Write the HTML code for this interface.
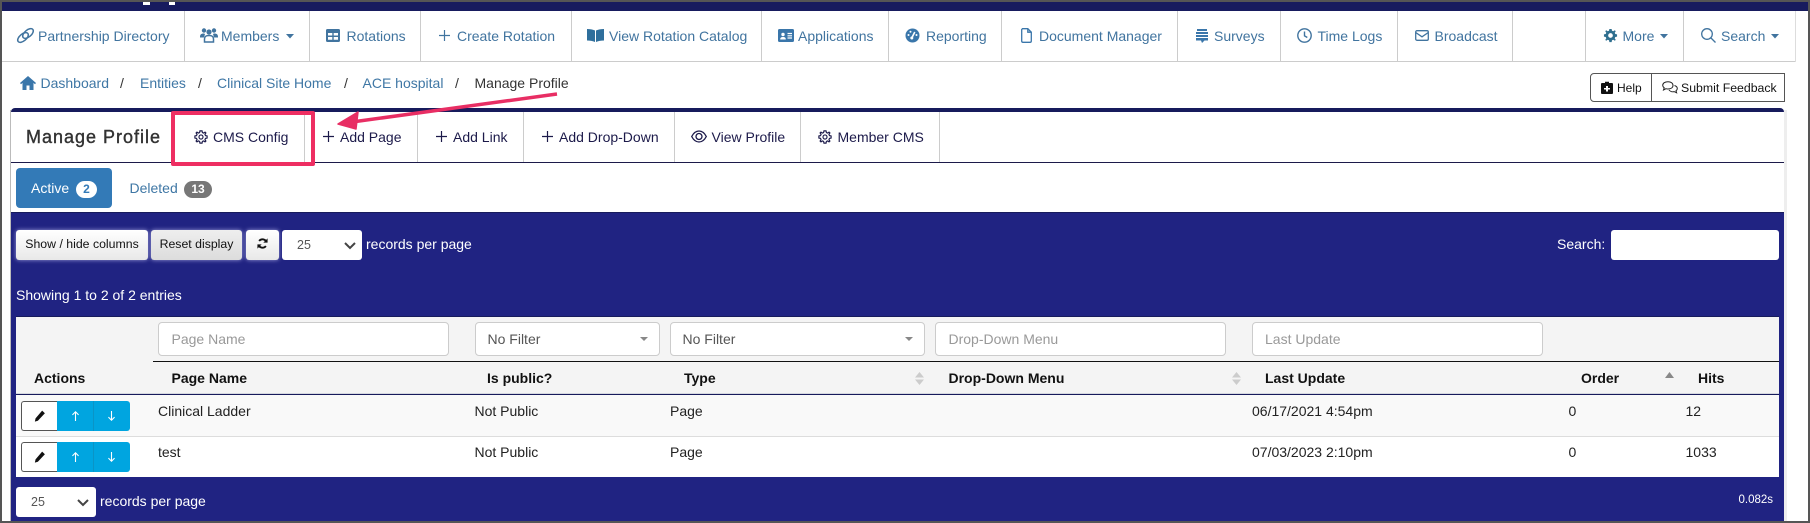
<!DOCTYPE html>
<html><head><meta charset="utf-8"><title>Manage Profile</title>
<style>
html,body{margin:0;padding:0}
html{background:#fff}
body{width:1810px;height:523px;position:relative;overflow:hidden;background:#fff;font-family:"Liberation Sans",sans-serif;font-size:14px;color:#333;filter:blur(.3px)}
.b{position:absolute}
.t{position:absolute;white-space:nowrap;line-height:20px;height:20px}
svg{position:absolute;overflow:visible}
.n{color:#41749f}
.l{color:#3f77a5}
.k{color:#1c1a4a}
.w{color:#fff}
.h{font-weight:bold;color:#111}
.s{background:#ccc;width:1px;top:11px;height:51px}
.p{background:#ccc;width:1px;top:112px;height:50px}
.inp{background:#fff;border:1px solid #ccc;border-radius:4px;box-sizing:border-box;height:34px;top:322px}
.ph{color:#999}
.btn{background:linear-gradient(#fff,#e8e8e8);border-radius:3px;box-shadow:0 0 4px #9c9cd8;top:230px;height:30px;box-sizing:border-box;color:#111;font-size:12.3px;text-align:center;line-height:29px;white-space:nowrap}
</style></head><body>
<!-- frame -->
<div class="b" style="left:0;top:0;width:1810px;height:2px;background:#555"></div>
<div class="b" style="left:0;top:2px;width:1808px;height:9px;background:#171b5e"></div>
<div class="b" style="left:143px;top:2px;width:7px;height:3px;background:#fff"></div>
<div class="b" style="left:169px;top:2px;width:6px;height:3px;background:#fff"></div>
<div class="b" style="left:0;top:0;width:2px;height:523px;background:#555"></div>
<div class="b" style="left:1808px;top:0;width:2px;height:523px;background:#555"></div>
<div class="b" style="left:2px;top:61px;width:1793px;height:1px;background:#ccc"></div>
<div class="b" style="left:1795px;top:11px;width:1px;height:51px;background:#ddd"></div>
<div class="b s" style="left:184px"></div><div class="b s" style="left:309px"></div><div class="b s" style="left:420px"></div><div class="b s" style="left:571px"></div><div class="b s" style="left:761px"></div><div class="b s" style="left:888px"></div><div class="b s" style="left:1001px"></div><div class="b s" style="left:1177px"></div><div class="b s" style="left:1280px"></div><div class="b s" style="left:1397px"></div><div class="b s" style="left:1512px"></div><div class="b s" style="left:1585px"></div><div class="b s" style="left:1683px"></div>

<!-- nav -->
<svg style="left:16px;top:27px" width="19" height="17" viewBox="0 0 19 17" fill="none" stroke="#41749f" stroke-width="1.5"><ellipse cx="7" cy="10.5" rx="6.3" ry="3.4" transform="rotate(-40 7 10.5)"/><ellipse cx="12" cy="6.5" rx="6.3" ry="3.4" transform="rotate(-40 12 6.5)"/></svg>
<div class="t n" style="left:38px;top:26px">Partnership Directory</div>
<svg style="left:200px;top:27px" width="18" height="16" viewBox="0 0 18 16" fill="#41749f"><circle cx="4" cy="3.5" r="2.2"/><circle cx="14" cy="3.5" r="2.2"/><circle cx="9" cy="5" r="2.6"/><path d="M0 10c0-3 1.5-3.5 4-3.5l1 .5-1 3.5H0zM18 10c0-3-1.5-3.500-4-3.500l-1 .5 1 3.500h4z"/><path d="M4.500 15v-3c0-3 2-3.500 4.500-3.500s4.500.5 4.500 3.500v3z" fill="none" stroke="#41749f" stroke-width="1.5"/></svg>
<div class="t n" style="left:221px;top:26px">Members</div>
<svg style="left:286px;top:34px" width="8" height="4.500" viewBox="0 0 9 5" fill="#41749f"><path d="M0 0h9L4.500 5z"/></svg>
<svg style="left:326px;top:29px" width="14" height="13" viewBox="0 0 14 13"><rect width="14" height="13" rx="1.500" fill="#41749f"/><path d="M2 4h4.300v2.500H2zM7.700 4H12v2.500H7.700zM2 8h4.300v2.800H2zM7.700 8H12v2.800H7.700z" fill="#fff"/></svg>
<div class="t n" style="left:346.5px;top:26px">Rotations</div>
<svg style="left:439px;top:30px" width="11" height="11" viewBox="0 0 11 11" stroke="#41749f" stroke-width="1.2"><path d="M5.500 0v11M0 5.500h11"/></svg>
<div class="t n" style="left:457px;top:26px">Create Rotation</div>
<svg style="left:587px;top:29px" width="17" height="13" viewBox="0 0 17 13" fill="#2f6f9c"><path d="M0 0c3 0 6 .5 8 1.500V13c-2-1-5-1.500-8-1.500zM17 0c-3 0-6 .5-8 1.500V13c2-1 5-1.500 8-1.500z"/></svg>
<div class="t n" style="left:609px;top:26px">View Rotation Catalog</div>
<svg style="left:778px;top:29px" width="16" height="13" viewBox="0 0 16 13"><rect width="16" height="13" rx="1.500" fill="#3a76aa"/><circle cx="5" cy="5.500" r="1.700" fill="#fff"/><path d="M2.200 10.500c0-2 1-2.500 2.800-2.500s2.800.5 2.800 2.500z" fill="#fff"/><path d="M9.500 4.500h4.500M9.500 6.800h4.500M9.500 9h4.500" stroke="#fff" stroke-width="1.2"/></svg>
<div class="t n" style="left:798px;top:26px">Applications</div>
<svg style="left:905px;top:28px" width="15" height="15" viewBox="0 0 15 15"><circle cx="7.500" cy="7.500" r="7" fill="#3a76aa"/><path d="M7 9.500L9.800 4" stroke="#fff" stroke-width="1.6"/><circle cx="6.800" cy="10" r="1.500" fill="#fff"/><circle cx="3.500" cy="7" r="1" fill="#fff"/><circle cx="5.500" cy="3.800" r="1" fill="#fff"/><circle cx="11.500" cy="7" r="1" fill="#fff"/></svg>
<div class="t n" style="left:926px;top:26px">Reporting</div>
<svg style="left:1021px;top:28px" width="11" height="15" viewBox="0 0 11 15" fill="none" stroke="#3a76aa" stroke-width="1.3"><path d="M1.500.7h5.300L10.300 4.200V13a1.300 1.300 0 0 1-1.300 1.300H2A1.300 1.300 0 0 1 .7 13V1.500z"/><path d="M6.800.7v3.500h3.500"/></svg>
<div class="t n" style="left:1039px;top:26px">Document Manager</div>
<svg style="left:1196px;top:29px" width="12" height="15" viewBox="0 0 12 15" fill="#3a76aa"><path d="M1 0h10v2H1zM0 3h12v2H0zM0 6h12v2H0zM0 9h12v2.500H8.500L6 14l-1-2.500H0z"/></svg>
<div class="t n" style="left:1214px;top:26px">Surveys</div>
<svg style="left:1297px;top:28px" width="15" height="15" viewBox="0 0 15 15" fill="none" stroke="#41749f" stroke-width="1.4"><circle cx="7.500" cy="7.500" r="6.700"/><path d="M7.500 3.500v4.300l2.800 1.700"/></svg>
<div class="t n" style="left:1317.5px;top:26px">Time Logs</div>
<svg style="left:1415px;top:30px" width="14" height="11" viewBox="0 0 14 11" fill="none" stroke="#41749f" stroke-width="1.3"><rect x=".7" y=".7" width="12.600" height="9.600" rx="1.300"/><path d="M.7 2.500L7 6.800l6.300-4.300"/></svg>
<div class="t n" style="left:1434.5px;top:26px">Broadcast</div>
<svg style="left:1603px;top:28px" width="15" height="15" viewBox="0 0 16 16"><path fill="#2f6f8f" fill-rule="evenodd" d="M6.800 1H9.200L9.600 2.900 11 3.500 12.600 2.400 13.600 3.400 12.500 5 13.100 6.400 15 6.800V9.200L13.100 9.600 12.500 11 13.600 12.600 12.600 13.600 11 12.500 9.600 13.100 9.200 15H6.800L6.400 13.100 5 12.500 3.400 13.600 2.400 12.600 3.500 11 2.900 9.600 1 9.200V6.800L2.900 6.400 3.500 5 2.400 3.400 3.400 2.400 5 3.500 6.400 2.900ZM8 5.500a2.500 2.500 0 1 0 0 5 2.500 2.500 0 0 0 0-5Z"/></svg>
<div class="t n" style="left:1622.5px;top:26px">More</div>
<svg style="left:1660px;top:34px" width="8" height="4.500" viewBox="0 0 9 5" fill="#41749f"><path d="M0 0h9L4.500 5z"/></svg>
<svg style="left:1701px;top:28px" width="15" height="15" viewBox="0 0 15 15" fill="none" stroke="#41749f" stroke-width="1.3"><circle cx="6" cy="6" r="5.300"/><path d="M10 10l4.500 4.500"/></svg>
<div class="t n" style="left:1721px;top:26px">Search</div>
<svg style="left:1771px;top:34px" width="8" height="4.500" viewBox="0 0 9 5" fill="#41749f"><path d="M0 0h9L4.500 5z"/></svg>

<!-- breadcrumb -->
<svg style="left:20px;top:76px" width="16" height="14" viewBox="0 0 16 14" fill="#3a76aa"><path d="M8 0L0 7l1 1.200 1.500-1.300V14h4v-4.500h3V14h4V6.900L15 8.200 16 7z"/></svg>
<div class="t l" style="left:40.5px;top:73px">Dashboard</div>
<div class="t" style="left:120px;top:73px">/</div>
<div class="t l" style="left:140px;top:73px">Entities</div>
<div class="t" style="left:198px;top:73px">/</div>
<div class="t l" style="left:217px;top:73px">Clinical Site Home</div>
<div class="t" style="left:344px;top:73px">/</div>
<div class="t l" style="left:362.5px;top:73px">ACE hospital</div>
<div class="t" style="left:455px;top:73px">/</div>
<div class="t" style="left:474.5px;top:73px">Manage Profile</div>

<!-- help -->
<div class="b" style="left:1590px;top:73px;width:195px;height:29px;border:1px solid #555;box-sizing:border-box;border-radius:4px 0 0 4px"></div>
<div class="b" style="left:1651px;top:73px;width:1px;height:29px;background:#555"></div>
<svg style="left:1601px;top:81px" width="12" height="13" viewBox="0 0 12 13"><path d="M4 2V.7h4V2h3a1 1 0 0 1 1 1v9a1 1 0 0 1-1 1H1a1 1 0 0 1-1-1V3a1 1 0 0 1 1-1z" fill="#111"/><path d="M5 5h2v2h2v1.500H7v2H5v-2H3V7h2z" fill="#fff"/></svg>
<div class="t" style="left:1617px;top:78px;font-size:12px;color:#111">Help</div>
<svg style="left:1662px;top:81px" width="16" height="13" viewBox="0 0 16 13" fill="none" stroke="#222" stroke-width="1"><path d="M6 .7c3 0 5 1.500 5 3.700S9 8 6 8c-.7 0-1.300 0-2-.3L1.500 9 2.200 6.800C1.200 6 .7 5.300.7 4.400.7 2.200 3 .7 6 .7z"/><path d="M12.500 4.500c1.800.6 2.800 1.800 2.800 3 0 1-.5 1.700-1.300 2.300l.6 2-2.400-1.200c-2 .5-4.200-.2-5.200-1.700"/></svg>
<div class="t" style="left:1681px;top:78px;font-size:12.3px;color:#111">Submit Feedback</div>

<!-- panel -->
<div class="b" style="left:11px;top:108px;width:1773px;height:4px;background:#171b5c;border-radius:4px 4px 0 0"></div>
<div class="b" style="left:1784px;top:110px;width:3px;height:411px;background:#eee"></div>
<div class="b" style="left:10px;top:110px;width:1px;height:411px;background:#bbb"></div>
<div class="b" style="left:11px;top:162px;width:1773px;height:1px;background:#1c1a4a"></div>
<div class="t" style="left:26px;top:125px;font-size:18px;line-height:24px;height:24px;color:#333;letter-spacing:1px;-webkit-text-stroke:.4px #333">Manage Profile</div>
<div class="b p" style="left:304px"></div><div class="b p" style="left:417px"></div><div class="b p" style="left:523px"></div><div class="b p" style="left:674px"></div><div class="b p" style="left:800px"></div><div class="b p" style="left:939px"></div>
<svg style="left:194px;top:130px" width="14" height="14" viewBox="0 0 16 16" fill="none" stroke="#1c1a4a" stroke-width="1.3"><path d="M6.800 1H9.200L9.600 2.900 11 3.500 12.600 2.400 13.600 3.400 12.500 5 13.100 6.400 15 6.800V9.200L13.100 9.600 12.500 11 13.600 12.600 12.600 13.600 11 12.500 9.600 13.100 9.200 15H6.800L6.400 13.100 5 12.500 3.400 13.600 2.400 12.600 3.500 11 2.900 9.600 1 9.200V6.800L2.900 6.400 3.500 5 2.400 3.400 3.400 2.400 5 3.500 6.400 2.900Z"/><circle cx="8" cy="8" r="2.300"/></svg>
<div class="t k" style="left:213px;top:127px">CMS Config</div>
<svg style="left:323px;top:131px" width="11" height="11" viewBox="0 0 11 11" stroke="#1c1a4a" stroke-width="1.2"><path d="M5.500 0v11M0 5.500h11"/></svg>
<div class="t k" style="left:340px;top:127px">Add Page</div>
<svg style="left:436px;top:131px" width="11" height="11" viewBox="0 0 11 11" stroke="#1c1a4a" stroke-width="1.2"><path d="M5.500 0v11M0 5.500h11"/></svg>
<div class="t k" style="left:453px;top:127px">Add Link</div>
<svg style="left:542px;top:131px" width="11" height="11" viewBox="0 0 11 11" stroke="#1c1a4a" stroke-width="1.2"><path d="M5.500 0v11M0 5.500h11"/></svg>
<div class="t k" style="left:559px;top:127px">Add Drop-Down</div>
<svg style="left:691px;top:130px" width="16" height="13" viewBox="0 0 16 13" fill="none" stroke="#1c1a4a" stroke-width="1.3"><path d="M.7 6.500C2.500 3 5 1 8 1s5.500 2 7.300 5.500C13.500 10 11 12 8 12S2.500 10 .7 6.500z"/><circle cx="8" cy="6.500" r="3"/></svg>
<div class="t k" style="left:711.5px;top:127px">View Profile</div>
<svg style="left:818px;top:130px" width="14" height="14" viewBox="0 0 16 16" fill="none" stroke="#1c1a4a" stroke-width="1.3"><path d="M6.800 1H9.200L9.600 2.900 11 3.500 12.600 2.400 13.600 3.400 12.500 5 13.100 6.400 15 6.800V9.200L13.100 9.600 12.500 11 13.600 12.600 12.600 13.600 11 12.500 9.600 13.100 9.200 15H6.800L6.400 13.100 5 12.500 3.400 13.600 2.400 12.600 3.500 11 2.900 9.600 1 9.200V6.800L2.900 6.400 3.500 5 2.400 3.400 3.400 2.400 5 3.500 6.400 2.900Z"/><circle cx="8" cy="8" r="2.300"/></svg>
<div class="t k" style="left:837.5px;top:127px">Member CMS</div>

<!-- tabs -->
<div class="b" style="left:16px;top:168px;width:96px;height:40px;background:#337ab7;border-radius:4px"></div>
<div class="t w" style="left:31px;top:178px">Active</div>
<div class="b" style="left:76px;top:181px;width:21px;height:17px;border-radius:9px;background:#fff;color:#337ab7;font-size:12px;font-weight:bold;text-align:center;line-height:17px">2</div>
<div class="t l" style="left:129.5px;top:178px">Deleted</div>
<div class="b" style="left:184px;top:181px;width:28px;height:17px;border-radius:9px;background:#777;color:#fff;font-size:12px;font-weight:bold;text-align:center;line-height:17px">13</div>

<!-- blue band -->
<div class="b" style="left:11px;top:212px;width:1773px;height:309px;background:#202382"></div>
<div class="b" style="left:11px;top:212px;width:1773px;height:1px;background:#171b5c"></div>
<div class="b" style="left:2px;top:521px;width:1806px;height:2px;background:#555"></div>
<div class="b btn" style="left:16px;width:132px">Show / hide columns</div>
<div class="b btn" style="left:151px;width:91px;background:linear-gradient(#eee,#dcdcdc)">Reset display</div>
<div class="b btn" style="left:246px;width:33px"></div>
<svg style="left:257px;top:238px" width="11" height="11" viewBox="0 0 13 13" fill="none" stroke="#111" stroke-width="2.2"><path d="M11 4.500A5 5 0 0 0 2.500 3.500M2 8.500A5 5 0 0 0 10.500 9.500"/><path d="M12.500 .5v5h-5zM.5 12.500v-5h5z" fill="#111" stroke="none"/></svg>
<div class="b" style="left:282px;top:230px;width:80px;height:30px;background:#fff;border-radius:3px"></div>
<div class="t" style="left:297px;top:235px;font-size:12.5px;color:#555">25</div>
<svg style="left:344px;top:242px" width="12" height="7" viewBox="0 0 12 7" fill="none" stroke="#444" stroke-width="2"><path d="M1 1l5 5 5-5"/></svg>
<div class="t w" style="left:366px;top:234px">records per page</div>
<div class="t w" style="left:1557px;top:234px">Search:</div>
<div class="b" style="left:1611px;top:230px;width:168px;height:30px;background:#fff;border-radius:3px"></div>
<div class="t w" style="left:16px;top:285px">Showing 1 to 2 of 2 entries</div>

<!-- table -->
<div class="b" style="left:16px;top:316px;width:1763px;height:161px;background:#fff"></div>
<div class="b" style="left:16px;top:317px;width:1763px;height:78px;background:#f4f4f4"></div>
<div class="b" style="left:16px;top:316px;width:1763px;height:1px;background:#171b5c"></div>
<div class="b inp" style="left:158px;width:291px"></div><div class="t ph" style="left:171.5px;top:329px">Page Name</div>
<div class="b inp" style="left:475px;width:185px"></div><div class="t" style="left:487.5px;top:329px;color:#555">No Filter</div>
<svg style="left:640px;top:337px" width="8" height="4" viewBox="0 0 8 4" fill="#888"><path d="M0 0h8L4 4z"/></svg>
<div class="b inp" style="left:670px;width:255px"></div><div class="t" style="left:682.5px;top:329px;color:#555">No Filter</div>
<svg style="left:905px;top:337px" width="8" height="4" viewBox="0 0 8 4" fill="#888"><path d="M0 0h8L4 4z"/></svg>
<div class="b inp" style="left:935px;width:291px"></div><div class="t ph" style="left:948.5px;top:329px">Drop-Down Menu</div>
<div class="b inp" style="left:1252px;width:291px"></div><div class="t ph" style="left:1265px;top:329px">Last Update</div>
<div class="b" style="left:153px;top:361px;width:1626px;height:1px;background:#111"></div>
<div class="b" style="left:16px;top:393px;width:1763px;height:1px;background:#d5d8e0"></div>
<div class="b" style="left:16px;top:394px;width:1763px;height:1px;background:#171b5c"></div>
<div class="b" style="left:16px;top:395px;width:1763px;height:41px;background:#f9f9f9"></div>
<div class="b" style="left:16px;top:436px;width:1763px;height:1px;background:#ddd"></div>

<div class="t h" style="left:34px;top:368px">Actions</div>
<div class="t h" style="left:171.5px;top:368px">Page Name</div>
<div class="t h" style="left:487px;top:368px">Is public?</div>
<div class="t h" style="left:684px;top:368px">Type</div>
<svg style="left:915px;top:372px" width="9" height="13" viewBox="0 0 9 13" fill="#ccc"><path d="M0 5.500L4.500 0 9 5.500zM0 7.500L4.500 13 9 7.500z"/></svg>
<div class="t h" style="left:948.5px;top:368px">Drop-Down Menu</div>
<svg style="left:1232px;top:372px" width="9" height="13" viewBox="0 0 9 13" fill="#ccc"><path d="M0 5.500L4.500 0 9 5.500zM0 7.500L4.500 13 9 7.500z"/></svg>
<div class="t h" style="left:1265px;top:368px">Last Update</div>
<div class="t h" style="left:1581px;top:368px">Order</div>
<svg style="left:1665px;top:372px" width="9" height="6" viewBox="0 0 9 6" fill="#888"><path d="M0 6L4.500 0 9 6z"/></svg>
<div class="t h" style="left:1698px;top:368px">Hits</div>

<!-- row 1 -->
<div class="b" style="left:21px;top:401px;width:37px;height:30px;background:#fff;border:1px solid #555;border-right:0;box-sizing:border-box;border-radius:3px 0 0 3px"></div>
<div class="b" style="left:57px;top:401px;width:73px;height:30px;background:#00a5e0;border-radius:0 3px 3px 0"></div>
<div class="b" style="left:93px;top:401px;width:1px;height:30px;background:#0a94c6"></div>
<svg style="left:34px;top:410px" width="12" height="12" viewBox="0 0 13 14"><path d="M9 .8l3.200 3L4 12.500.5 13.500 1.300 9.800z" fill="#111"/></svg>
<svg style="left:71px;top:411px" width="9" height="10" viewBox="0 0 10 13" fill="none" stroke="#fff" stroke-width="1.4"><path d="M5 13V1M1 5l4-4 4 4"/></svg>
<svg style="left:107px;top:411px" width="9" height="10" viewBox="0 0 10 13" fill="none" stroke="#fff" stroke-width="1.4"><path d="M5 0v12M1 8l4 4 4-4"/></svg>
<div class="t" style="left:158px;top:401px;color:#222">Clinical Ladder</div>
<div class="t" style="left:474.5px;top:401px;color:#222">Not Public</div>
<div class="t" style="left:670px;top:401px;color:#222">Page</div>
<div class="t" style="left:1252px;top:401px;color:#222">06/17/2021 4:54pm</div>
<div class="t" style="left:1568.5px;top:401px;color:#222">0</div>
<div class="t" style="left:1685.5px;top:401px;color:#222">12</div>

<!-- row 2 -->
<div class="b" style="left:21px;top:442px;width:37px;height:30px;background:#fff;border:1px solid #555;border-right:0;box-sizing:border-box;border-radius:3px 0 0 3px"></div>
<div class="b" style="left:57px;top:442px;width:73px;height:30px;background:#00a5e0;border-radius:0 3px 3px 0"></div>
<div class="b" style="left:93px;top:442px;width:1px;height:30px;background:#0a94c6"></div>
<svg style="left:34px;top:451px" width="12" height="12" viewBox="0 0 13 14"><path d="M9 .8l3.200 3L4 12.500.5 13.500 1.300 9.800z" fill="#111"/></svg>
<svg style="left:71px;top:452px" width="9" height="10" viewBox="0 0 10 13" fill="none" stroke="#fff" stroke-width="1.4"><path d="M5 13V1M1 5l4-4 4 4"/></svg>
<svg style="left:107px;top:452px" width="9" height="10" viewBox="0 0 10 13" fill="none" stroke="#fff" stroke-width="1.4"><path d="M5 0v12M1 8l4 4 4-4"/></svg>
<div class="t" style="left:158px;top:442px;color:#222">test</div>
<div class="t" style="left:474.5px;top:442px;color:#222">Not Public</div>
<div class="t" style="left:670px;top:442px;color:#222">Page</div>
<div class="t" style="left:1252px;top:442px;color:#222">07/03/2023 2:10pm</div>
<div class="t" style="left:1568.5px;top:442px;color:#222">0</div>
<div class="t" style="left:1685.5px;top:442px;color:#222">1033</div>

<!-- footer -->
<div class="b" style="left:16px;top:487px;width:80px;height:30px;background:#fff;border-radius:3px"></div>
<div class="t" style="left:31px;top:492px;font-size:12.5px;color:#555">25</div>
<svg style="left:77px;top:499px" width="12" height="7" viewBox="0 0 12 7" fill="none" stroke="#444" stroke-width="2"><path d="M1 1l5 5 5-5"/></svg>
<div class="t w" style="left:100px;top:491px">records per page</div>
<div class="t w" style="left:1738.5px;top:490px;font-size:11.5px">0.082s</div>

<!-- annotation -->
<div class="b" style="left:171px;top:111px;width:144px;height:55px;border:4px solid #ee2e62;box-sizing:border-box;border-radius:2px"></div>
<svg style="left:0;top:0" width="1810" height="523" viewBox="0 0 1810 523"><path d="M557 94L352 122" stroke="#e82e64" stroke-width="3.5" fill="none"/><path d="M338 124L358 112 356 129z" fill="#e82e64" stroke="#e82e64" stroke-width="1.5" stroke-linejoin="round"/></svg>
</body></html>
